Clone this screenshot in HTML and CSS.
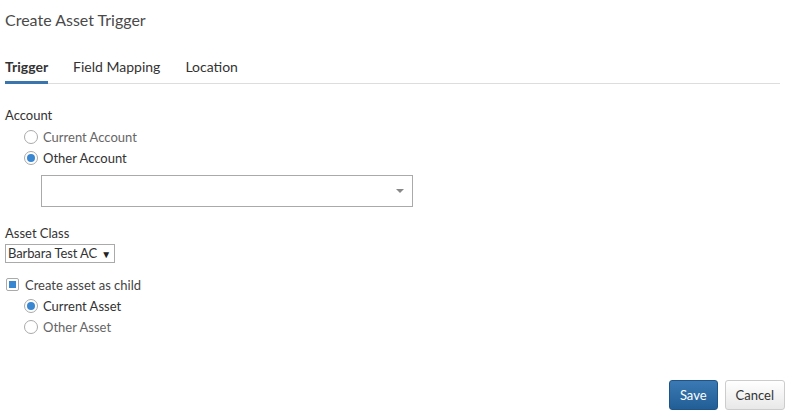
FILE: index.html
```html
<!DOCTYPE html>
<html>
<head>
  <title>Create Asset Trigger</title>
  <link rel="stylesheet" href="styles.css">
</head>
<body>
  <h2 class="title">Create Asset Trigger</h2>

  <div class="tabs">
    <span class="tab active">Trigger</span>
    <span class="tab">Field Mapping</span>
    <span class="tab">Location</span>
  </div>

  <div class="section">
    <div class="field-label">Account</div>
    <div class="options">
      <label class="option"><span class="radio"></span>Current Account</label>
      <label class="option selected"><span class="radio checked"></span>Other Account</label>
      <div class="combo"><span class="caret"></span></div>
    </div>
  </div>

  <div class="section class-section">
    <div class="field-label">Asset Class</div>
    <div class="select-small">Barbara Test AC<span class="arrow">&#9660;</span></div>
  </div>

  <label class="check-row"><span class="checkbox checked"></span>Create asset as child</label>
  <div class="options">
    <label class="option selected"><span class="radio checked"></span>Current Asset</label>
    <label class="option"><span class="radio"></span>Other Asset</label>
  </div>

  <div class="actions">
    <button class="btn btn-primary">Save</button>
    <button class="btn">Cancel</button>
  </div>
</body>
</html>
```

FILE: styles.css
```css
body {
  font-family: Lato, "Open Sans", sans-serif;
  font-size: 13px;
  color: #333;
  margin: 0;
  padding: 0 5px;
  width: 785px;
  height: 420px;
  position: relative;
}

.title {
  font-size: 16px;
  font-weight: normal;
  color: #4a4a4a;
  margin: 0;
  padding-top: 10px;
  line-height: 20px;
}

.tabs {
  display: flex;
  gap: 25px;
  margin-top: 27px;
  border-bottom: 1px solid #ddd;
  width: 775px;
}

.tab {
  font-size: 14px;
  color: #333;
  line-height: 20px;
  padding-bottom: 6px;
}

.tab.active {
  font-weight: bold;
  border-bottom: 3px solid #3a75ad;
  padding-bottom: 3px;
  margin-bottom: -1px;
}

.section {
  margin-top: 22px;
}

.field-label {
  line-height: 18px;
  color: #333;
}

.options {
  padding-left: 19px;
}

.section .options {
  margin-top: 2px;
}

.option {
  display: flex;
  align-items: center;
  gap: 5px;
  height: 21px;
  color: #666;
}

.option.selected {
  color: #333;
}

.radio {
  width: 12px;
  height: 12px;
  border: 1px solid #aaa;
  border-radius: 50%;
  background: #fff;
  box-sizing: content-box;
  position: relative;
}

.radio.checked::after {
  content: "";
  position: absolute;
  left: 2px;
  top: 2px;
  width: 8px;
  height: 8px;
  border-radius: 50%;
  background: #3a87d1;
}

.combo {
  margin: 7px 0 0 17px;
  width: 370px;
  height: 30px;
  border: 1px solid #aaa;
  position: relative;
}

.caret {
  position: absolute;
  right: 8px;
  top: 13px;
  border-left: 4px solid transparent;
  border-right: 4px solid transparent;
  border-top: 4px solid #888;
}

.class-section {
  margin-top: 17px;
}

.select-small {
  display: inline-block;
  margin-top: 2px;
  border: 1px solid #aaa;
  padding: 0 3px 0 2px;
  line-height: 16px;
  color: #333;
  letter-spacing: -0.1px;
}

.arrow {
  font-size: 10px;
  margin-left: 4px;
  color: #222;
}

.check-row {
  display: flex;
  align-items: center;
  gap: 6px;
  margin-top: 11px;
  height: 21px;
  color: #444;
}

.checkbox {
  width: 11px;
  height: 11px;
  border: 1px solid #aaa;
  border-radius: 2px;
  position: relative;
  margin-left: 1px;
}

.checkbox.checked::after {
  content: "";
  position: absolute;
  left: 2px;
  top: 2px;
  width: 7px;
  height: 7px;
  background: #3a87d1;
}

.actions {
  position: absolute;
  right: 10px;
  top: 380px;
  display: flex;
  gap: 7px;
}

.btn {
  font-family: Lato, "Open Sans", sans-serif;
  font-size: 13px;
  height: 30px;
  padding: 0 10px;
  border: 1px solid #ccc;
  border-radius: 3px;
  background: linear-gradient(#fff, #e8e8e8);
  color: #333;
}

.btn-primary {
  background: linear-gradient(#3a79b4, #225e96);
  border-color: #1f5586;
  color: #fff;
}
```
